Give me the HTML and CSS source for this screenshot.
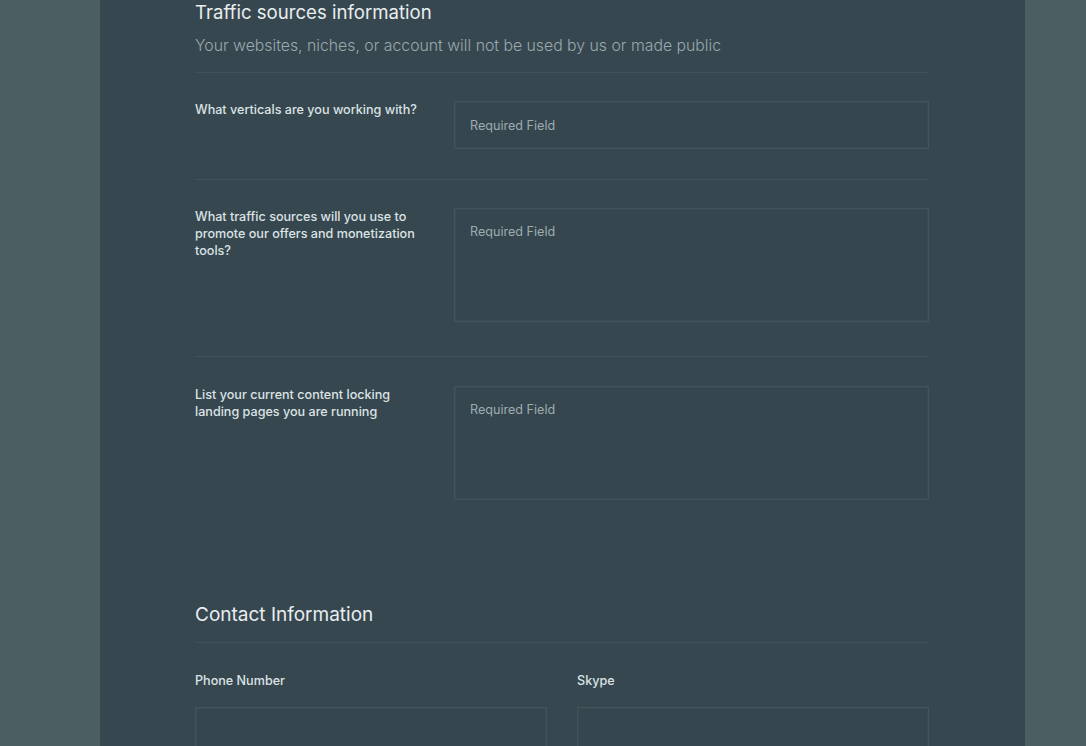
FILE: index.html
```html
<!DOCTYPE html>
<html lang="en">
	<head>
		<meta charset="UTF-8" />
		<title>Signup form</title>
		<meta name="viewport" content="width=device-width,initial-scale=1" />
		<link rel="stylesheet" href="styles.css">
	</head>
	<body>
		<main class="panel">
			<form class="signup">
				<section class="block">
					<h2 class="block-title">Traffic sources information</h2>
					<p class="block-note">Your websites, niches, or account will not be used by us or made public</p>
					<div class="row">
						<label class="row-label" for="verticals">What verticals are you working with?</label>
						<input class="field" id="verticals" type="text" placeholder="Required Field" />
					</div>
					<div class="row">
						<label class="row-label" for="sources">What traffic sources will you use to promote our offers and monetization tools?</label>
						<textarea class="field field-area" id="sources" placeholder="Required Field"></textarea>
					</div>
					<div class="row row-last">
						<label class="row-label" for="landers">List your current content locking landing pages you are running</label>
						<textarea class="field field-area" id="landers" placeholder="Required Field"></textarea>
					</div>
				</section>
				<section class="block block-contact">
					<h2 class="block-title block-title-ruled">Contact Information</h2>
					<div class="pair">
						<div class="pair-item">
							<label class="row-label" for="phone">Phone Number</label>
							<input class="field" id="phone" type="tel" />
						</div>
						<div class="pair-item">
							<label class="row-label" for="skype">Skype</label>
							<input class="field" id="skype" type="text" />
						</div>
					</div>
				</section>
			</form>
		</main>
	</body>
</html>
```

FILE: styles.css
```css
html,body{
	margin:0;
	padding:0;
	background-color:#4b5e61;
	height:100%;
	overflow:hidden;
}
body{
	font-family:Inter,"Liberation Sans",sans-serif;
	color:#e4ebed;
}
.panel{
	box-sizing:border-box;
	width:925px;
	min-height:100%;
	margin-left:100px;
	padding:0 96px 0 95px;
	background-color:#37474f;
}
.signup{
	display:flex;
	flex-direction:column;
}
.block-title{
	margin:0;
	font-size:18.6px;
	line-height:24px;
	font-weight:400;
	color:#e8eef0;
}
.block-note{
	margin:0;
	padding:11px 0 15px;
	font-size:15.8px;
	line-height:22px;
	font-weight:300;
	color:#9aa9ae;
	border-bottom:1px solid #405158;
}
.row{
	display:grid;
	grid-template-columns:235px 475px;
	column-gap:24px;
	padding:28px 0 30px;
	border-bottom:1px solid #405158;
}
.row + .row{
	padding-bottom:34px;
}
.row-last{
	padding-top:29px;
	border-bottom:none;
}
.row-label{
	font-size:12.6px;
	line-height:17px;
	font-weight:500;
	color:#dbe3e5;
}
.field{
	box-sizing:border-box;
	width:100%;
	height:48px;
	margin:0;
	padding:0 15px;
	font:inherit;
	font-size:12.6px;
	color:#dbe3e5;
	background-color:#36464e;
	border:1px solid #42535a;
	box-shadow:inset 0 0 0 1px #3a4b53;
	border-radius:0;
	outline:none;
}
.field-area{
	height:114px;
	padding:14px 15px;
	line-height:17px;
	resize:none;
	display:block;
}
.field::placeholder{
	color:#9dacb1;
	opacity:1;
}
.block-contact{
	padding-top:68px;
}
.block-title-ruled{
	padding:1px 0 15px;
	font-size:19px;
	border-bottom:1px solid #405158;
}
.pair{
	display:grid;
	grid-template-columns:1fr 1fr;
	column-gap:30px;
	padding-top:29px;
}
.pair-item{
	display:flex;
	flex-direction:column;
	gap:18px;
}
.pair-item .field{
	height:48px;
}
```
